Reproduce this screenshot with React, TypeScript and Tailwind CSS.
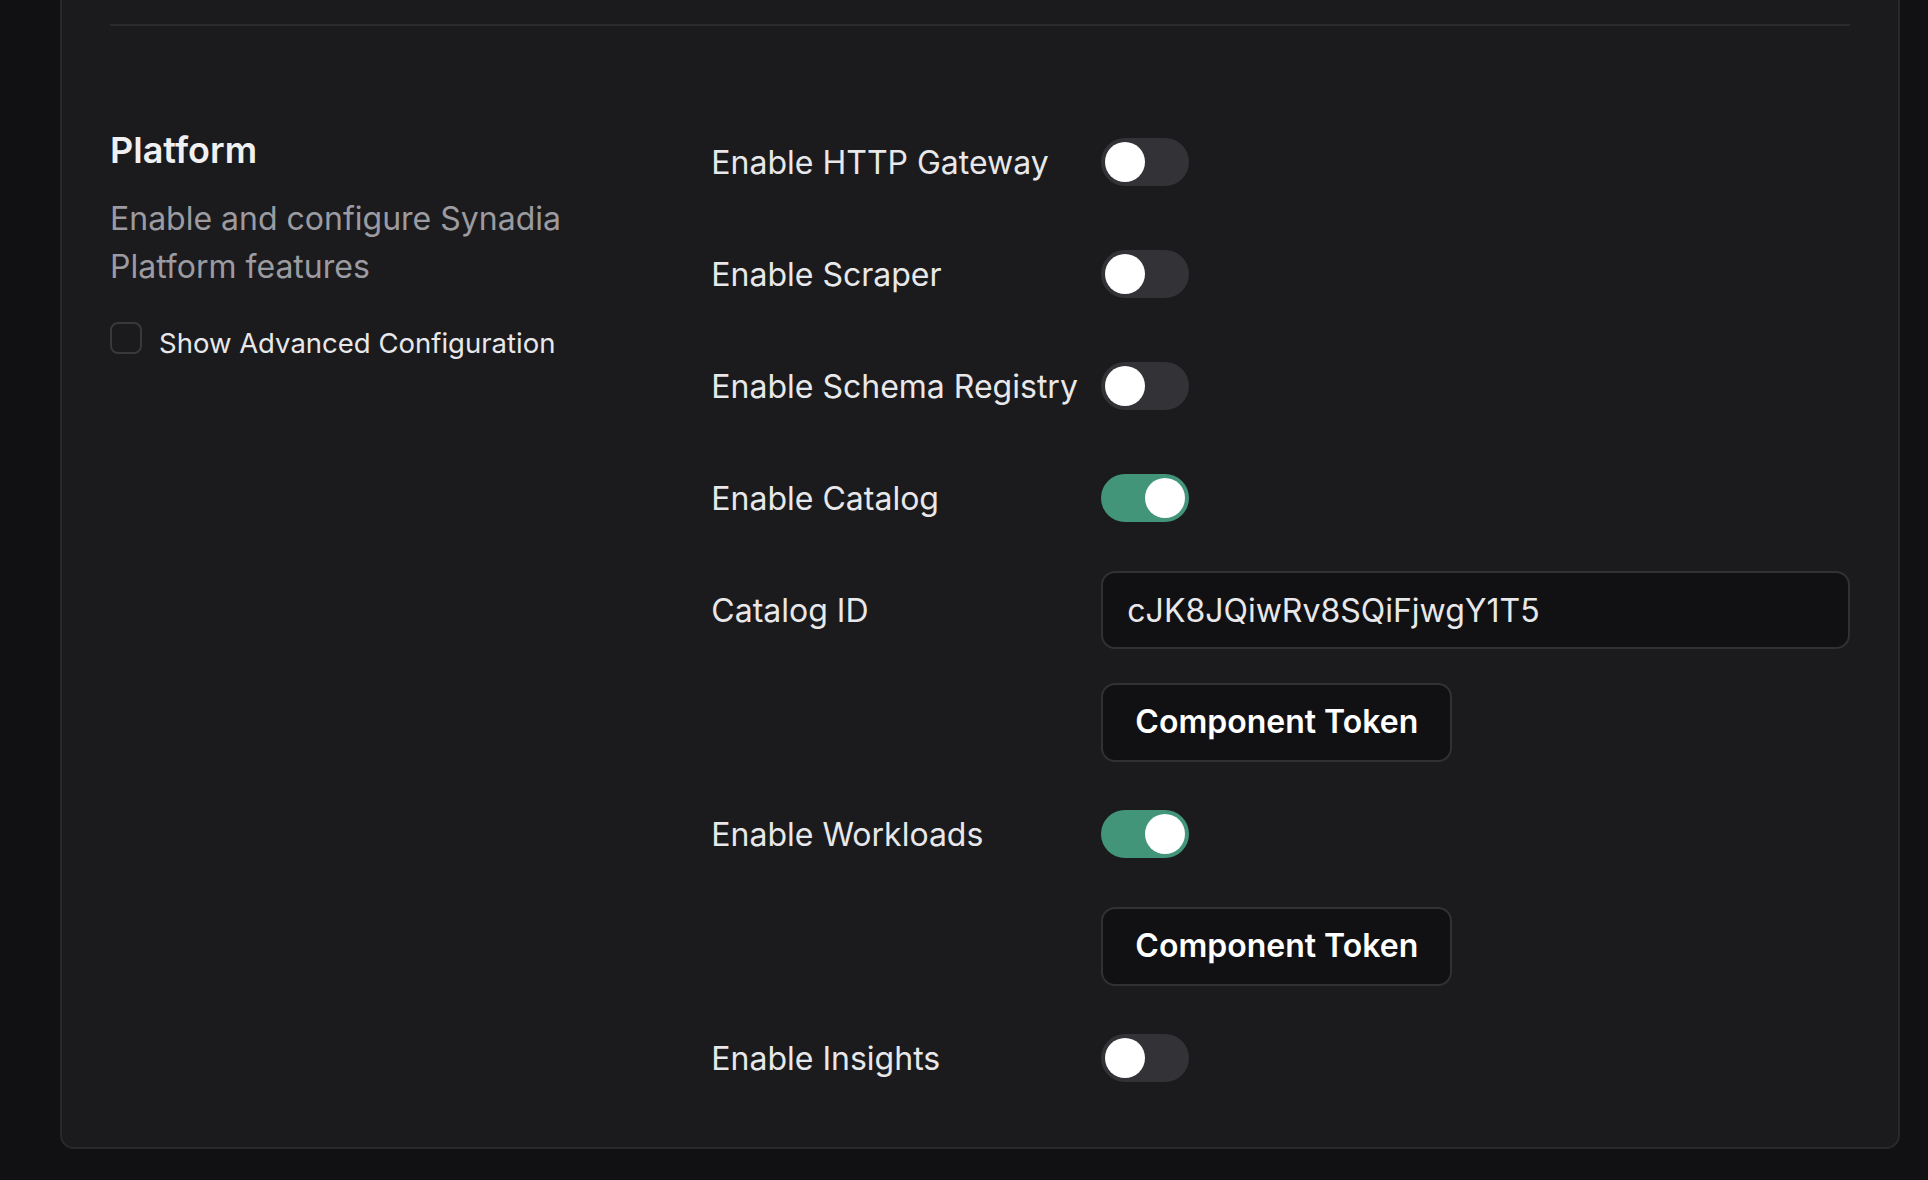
import { useState } from "react";

type Row =
  | { kind: "switch"; id: string; label: string; on: boolean }
  | { kind: "input"; id: string; label: string; value: string }
  | { kind: "button"; id: string; label: string };

const rows: Row[] = [
  { kind: "switch", id: "http", label: "Enable HTTP Gateway", on: false },
  { kind: "switch", id: "scraper", label: "Enable Scraper", on: false },
  { kind: "switch", id: "schema", label: "Enable Schema Registry", on: false },
  { kind: "switch", id: "catalog", label: "Enable Catalog", on: true },
  { kind: "input", id: "catalogId", label: "Catalog ID", value: "cJK8JQiwRv8SQiFjwgY1T5" },
  { kind: "button", id: "catalogToken", label: "Component Token" },
  { kind: "switch", id: "workloads", label: "Enable Workloads", on: true },
  { kind: "button", id: "workloadsToken", label: "Component Token" },
  { kind: "switch", id: "insights", label: "Enable Insights", on: false },
];

function Toggle({ on, onClick }: { on: boolean; onClick: () => void }) {
  return (
    <button
      type="button"
      onClick={onClick}
      className={`flex h-[48px] w-[88px] shrink-0 items-center rounded-full p-[4px] ${
        on ? "bg-[#43957a]" : "bg-[#323237]"
      }`}
    >
      <span
        className={`block h-[40px] w-[40px] rounded-full bg-white ${on ? "ml-auto" : ""}`}
      />
    </button>
  );
}

export default function App() {
  const [state, setState] = useState<Record<string, boolean>>(() =>
    Object.fromEntries(rows.filter((r) => r.kind === "switch").map((r) => [r.id, (r as any).on]))
  );
  const [advanced, setAdvanced] = useState(false);

  return (
    <div
      className="min-h-[1180px] bg-[#111113] pl-[60px] pr-[28px]"
      style={{ fontFamily: "Inter, 'Noto Sans', sans-serif" }}
    >
      <div className="rounded-b-[14px] border-2 border-t-0 border-[#29292c] bg-[#1b1b1d] px-[48px] pb-[49px] pt-[24px]">
        <div className="h-[2px] bg-[#2a2a2d]" />

        <div className="mt-[96px] grid grid-cols-3 gap-x-[64px]">
          <div>
            <h2 className="text-[36px] font-semibold leading-[56px] text-[#f0f0f2]">Platform</h2>
            <p className="mt-[17px] text-[32px] leading-[48px] text-[#9b9ba1]">
              Enable and configure Synadia Platform features
            </p>
            <label className="mt-[31px] flex cursor-pointer items-start gap-[17px]">
              <input
                type="checkbox"
                checked={advanced}
                onChange={(e) => setAdvanced(e.target.checked)}
                className="h-[32px] w-[32px] shrink-0 appearance-none rounded-[8px] border-2 border-[#38383d] bg-transparent"
              />
              <span className="mt-[1px] text-[27.5px] leading-[40px] text-[#e8e8eb]">
                Show Advanced Configuration
              </span>
            </label>
          </div>

          <div className="col-span-2 flex flex-col gap-[32px]">
            {rows.map((row) => (
              <div key={row.id} className="flex h-[80px] items-center">
                <div className="w-[390px] shrink-0 pt-[2px] text-[32px] text-[#e8e8eb]">
                  {row.kind === "button" ? "" : row.label}
                </div>
                {row.kind === "switch" && (
                  <Toggle
                    on={state[row.id]}
                    onClick={() => setState((s) => ({ ...s, [row.id]: !s[row.id] }))}
                  />
                )}
                {row.kind === "input" && (
                  <input
                    defaultValue={row.value}
                    className="h-[78px] flex-1 rounded-[14px] border-2 border-[#313135] bg-[#111113] px-[24px] text-[32px] text-[#e8e8eb] outline-none"
                  />
                )}
                {row.kind === "button" && (
                  <button
                    type="button"
                    className="h-[79px] rounded-[14px] border-2 border-[#313135] bg-[#111113] px-[32px] text-[32px] font-semibold text-white"
                  >
                    {row.label}
                  </button>
                )}
              </div>
            ))}
          </div>
        </div>
      </div>
    </div>
  );
}
